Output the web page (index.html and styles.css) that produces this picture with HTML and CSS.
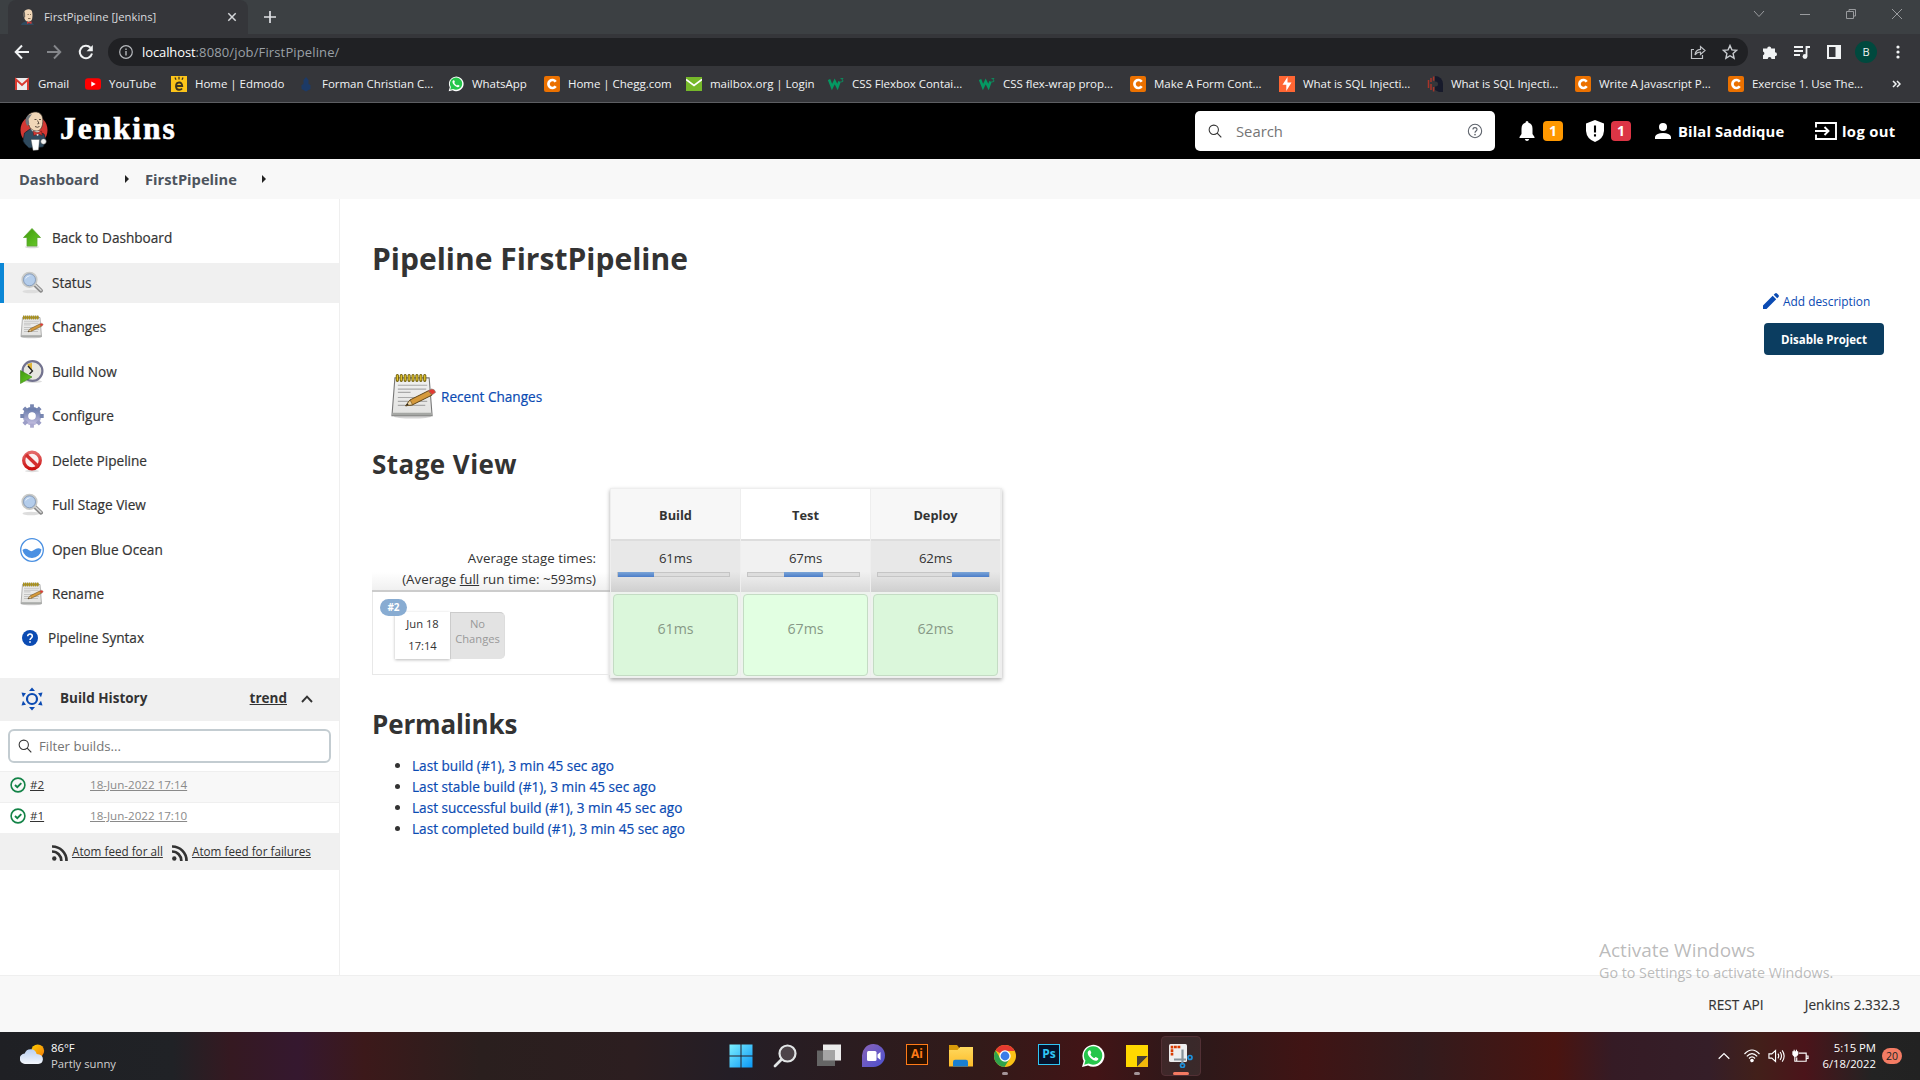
FILE: index.html
```html
<!DOCTYPE html>
<html lang="en">
<head>
<meta charset="utf-8">
<title>FirstPipeline [Jenkins]</title>
<link rel="stylesheet" href="styles.css">
</head>
<body>
<svg class="defs" width="0" height="0">
  <defs>
    <linearGradient id="paper" x1="0" y1="0" x2="0" y2="1"><stop offset="0" stop-color="#f1f1f1"/><stop offset="1" stop-color="#e2e2e0"/></linearGradient>
    <linearGradient id="green" x1="0" y1="0" x2="1" y2="1"><stop offset="0" stop-color="#3f9a0c"/><stop offset="1" stop-color="#69cb2b"/></linearGradient>
    <linearGradient id="gearfill" x1="0" y1="0" x2="0" y2="1"><stop offset="0" stop-color="#6d7fae"/><stop offset="1" stop-color="#b9b6da"/></linearGradient>
    <linearGradient id="redfill" x1="0" y1="0" x2="0" y2="1"><stop offset="0" stop-color="#e46a6a"/><stop offset="1" stop-color="#cb1212"/></linearGradient>
    <linearGradient id="win" x1="0" y1="0" x2="1" y2="1"><stop offset="0" stop-color="#7df0ff"/><stop offset="1" stop-color="#0a97f5"/></linearGradient>
    <linearGradient id="folder" x1="0" y1="0" x2="0" y2="1"><stop offset="0" stop-color="#ffd95e"/><stop offset="1" stop-color="#fdbc2a"/></linearGradient>
    <linearGradient id="teams" x1="0" y1="0" x2="1" y2="1"><stop offset="0" stop-color="#8a63b8"/><stop offset="1" stop-color="#4a50cf"/></linearGradient>
    <linearGradient id="cloud" x1="0" y1="0" x2="0" y2="1"><stop offset="0" stop-color="#b9d0f2"/><stop offset="1" stop-color="#f3f6fc"/></linearGradient>
    <linearGradient id="sun" x1="0" y1="0" x2="1" y2="1"><stop offset="0" stop-color="#ffd000"/><stop offset="1" stop-color="#f27a0a"/></linearGradient>
    <symbol id="butler" viewBox="0 0 28 40">
      <ellipse cx="14" cy="19" rx="13.500" ry="14.500" fill="#d33833"/>
      <path d="M4.500 22 10 18l8 3 6 2 2 7-3 6-14 1-4-4-2-3z" fill="#2f4a5e" stroke="#12202b" stroke-width=".7"/>
      <path d="M10.500 18 20 20l-2 5-3-2z" fill="#f4f4f4"/>
      <path d="M7 6C9 1 17-.5 20 2.500c3 2 3.200 7 2.500 11-.7 4-3 6.500-6 6.500-4 0-7-3-7.500-6C6 13 5.500 9 7 6z" fill="#f0d6b7" stroke="#3b342b" stroke-width=".7"/>
      <path d="M8 4.500C5.800 6 5 9 5.800 12l1.500 3 2-2-.7-5L12 3z" fill="#70767c"/>
      <path d="M14.500 8.500h2M19 8.500h2M17.500 9.500l1.500 3-1.700.4M15 15.500q2.500 1.500 4.500 0" fill="none" stroke="#3b2f25" stroke-width=".8"/>
      <path d="m13 20 4 1.700 4.500-1.700.8 4.500-4.500-1.800-4 2z" fill="#d33833" stroke="#5d1512" stroke-width=".5"/>
      <path d="M11 28.500h8.500l-1 10.500-5.500.5z" fill="#fff" stroke="#444" stroke-width=".4"/>
      <circle cx="23.500" cy="30.500" r="2.800" fill="#f2f2f2" stroke="#333" stroke-width=".5"/>
    </symbol>
    <symbol id="face" viewBox="0 0 16 16">
      <path d="M1 16q.5-3 5-3.500l6 .5 2 3z" fill="#2f4a5e"/>
      <path d="M4 3C5 .2 9.500-.5 11.300 1.300c1.500 1.500 1.400 6 .8 8.700-.6 2.500-4 3.500-6 2C4 10 3 6 4 3z" fill="#f0d6b7"/>
      <path d="M4.500 2C2.800 4 2.800 7 4.200 9l1-1L5 4z" fill="#6b655e"/>
      <path d="M7.500 5.500h1.300M10 5.500h1M8 9.500h2.500" stroke="#59452f" stroke-width=".7"/>
      <path d="m7 12.300 2 .9 2.500-.9v2.700L9 14l-2 1z" fill="#d33833"/>
    </symbol>
    <symbol id="lens" viewBox="0 0 24 24">
      <ellipse cx="11" cy="20.500" rx="8.500" ry="1.700" fill="#ddd"/>
      <path d="m15 14 6 5.700" stroke="#8c8c8c" stroke-width="4" stroke-linecap="round"/>
      <path d="m15.500 14 5.500 5.200" stroke="#d9d9d9" stroke-width="1.500" stroke-linecap="round"/>
      <circle cx="9.500" cy="8.800" r="7" fill="#b4cdeb" stroke="#c9cac7" stroke-width="2.200"/>
      <circle cx="9.500" cy="8.800" r="6" fill="none" stroke="#7892b8" stroke-width=".8"/>
      <path d="M5 8.500q1.200-4.300 6-4-4 1.200-6 4z" fill="#eef5fd"/>
    </symbol>
    <symbol id="notepad" viewBox="0 0 48 48">
      <ellipse cx="23" cy="44.500" rx="19" ry="2" fill="#d4d4d4"/>
      <path d="M5 5h35l3 38.500H2z" fill="url(#paper)" stroke="#777" stroke-width="1.100"/>
      <path d="M2.500 40.500h40l.3 3H2.200z" fill="#a5a7a4"/>
      <path d="M8 12.500h30M8 16.500h29M8 19.800h13M8 25h22M8 29h30M8 33h28" stroke="#a9a9a9" stroke-width="1.200"/>
      <path d="M7.500 2.500v5M11.500 2.500v5M15.500 2.500v5M19.500 2.500v5M23.500 2.500v5M27.500 2.500v5M31.500 2.500v5M35.500 2.500v5" stroke="#6e5c05" stroke-width="3.200" stroke-linecap="round"/>
      <path d="M7.500 2.800v4.400M11.500 2.800v4.400M15.500 2.800v4.400M19.500 2.800v4.400M23.500 2.800v4.400M27.500 2.800v4.400M31.500 2.800v4.400M35.500 2.800v4.400" stroke="#e5c62c" stroke-width="1.400" stroke-linecap="round"/>
      <path d="m16 33.500 4.500-6 19-9.500 3.500 4.500-20 10z" fill="#d69a3c" stroke="#5f4210" stroke-width="1"/>
      <path d="m16 33.500 4.500-6 2.500 5z" fill="#edd5a5" stroke="#5f4210" stroke-width=".6"/>
      <path d="m16 33.500 2-2.500 1 1.800z" fill="#222"/>
      <path d="m39 18 3.500-1.700q3.500.2 4 3.500L43 22.300z" fill="#e23b33" stroke="#8d7d72" stroke-width=".7"/>
    </symbol>
    <symbol id="q" viewBox="0 0 24 24"><circle cx="12" cy="12" r="10" fill="none" stroke="currentColor" stroke-width="1.600"/><path d="M9 9.700C9 6 15 6 15 9.600c0 2.400-3 2.400-3 5" fill="none" stroke="currentColor" stroke-width="1.700"/><circle cx="12" cy="17.500" r="1.200" fill="currentColor"/></symbol>
    <symbol id="search" viewBox="0 0 16 16"><circle cx="6.600" cy="6.600" r="5.300" fill="none" stroke="currentColor" stroke-width="1.200"/><path d="m10.500 10.500 4.700 4.700" stroke="currentColor" stroke-width="1.300"/></symbol>
    <symbol id="rss" viewBox="0 0 16 16"><circle cx="2.300" cy="13.500" r="2.200" fill="currentColor"/><path d="M0 6.500A9.200 9.200 0 0 1 9.300 16M0 1.500A14.200 14.200 0 0 1 14.500 16" fill="none" stroke="currentColor" stroke-width="2.700"/></symbol>
    <symbol id="ok" viewBox="0 0 16 16"><circle cx="8" cy="8" r="6.900" fill="none" stroke="#138347" stroke-width="1.600"/><path d="m5 8 2.300 2.200 4-4" fill="none" stroke="#138347" stroke-width="1.900"/></symbol>
    <symbol id="chegg" viewBox="0 0 16 16"><rect width="16" height="16" rx="2" fill="#eb7100"/><path d="M11.700 5.700A4 4 0 1 0 11.700 10.300" fill="none" stroke="#fff" stroke-width="2.700"/></symbol>
    <symbol id="whats" viewBox="0 0 24 24"><path d="M1 23l1.700-6A11 11 0 1 1 7 21.400z" fill="#fff"/><path d="M3.200 20.800l1.200-4.200A9.200 9.200 0 1 1 7.700 19.600z" fill="#25c64b"/><path d="M8 6.500c-2.500 1.500-1 5 1.500 7.500s6 4 7.700 1.500c.6-1-.2-1.500-2.400-2.500-1 .2-.8 1.400-2 1-1.500-.7-2.700-2-3.300-3.400-.2-.8.8-.8.8-1.800C9.600 6.800 9.400 6 8 6.500z" fill="#fff"/></symbol>
    <symbol id="w3" viewBox="0 0 16 16"><path d="M1 3.500 4 11l2.700-5.500L9.500 11l2-5.500" fill="none" stroke="#059862" stroke-width="2.600"/><path d="M12.500 2.500H15L13.800 4q1.500 0 1.200 1.300-.7 1-2.500.4" fill="none" stroke="#059862" stroke-width=".8"/></symbol>
  </defs>
</svg>

<header class="browser">
  <div class="tabstrip">
    <div class="tab">
      <svg class="i16"><use href="#face"/></svg>
      <span class="tab-title">FirstPipeline [Jenkins]</span>
      <svg class="tab-close" viewBox="0 0 10 10"><path d="m1.300 1.300 7.400 7.400M8.700 1.300 1.300 8.700" stroke="#d5d7da" stroke-width="1.500"/></svg>
    </div>
    <svg class="new-tab" viewBox="0 0 12 12"><path d="M6 0v12M0 6h12" stroke="#dfe1e5" stroke-width="1.700"/></svg>
    <div class="window-controls">
      <svg viewBox="0 0 12 12"><path d="m1 3 5 5.500L11 3"/></svg>
      <svg viewBox="0 0 12 12"><path d="M1 6.500h10"/></svg>
      <svg viewBox="0 0 12 12"><path d="M1.500 3.500h7v7h-7zM4 3.500v-2h6.500V8H8.500"/></svg>
      <svg viewBox="0 0 12 12"><path d="m1 1 10 10M11 1 1 11"/></svg>
    </div>
  </div>
  <div class="toolbar">
    <svg class="nav" viewBox="0 0 16 16"><path d="M15 8H2M8 1.500 1.700 8 8 14.500" fill="none" stroke="#f1f3f4" stroke-width="2"/></svg>
    <svg class="nav" viewBox="0 0 16 16"><path d="M1 8h13M8 1.500 14.300 8 8 14.500" fill="none" stroke="#85878b" stroke-width="1.900"/></svg>
    <svg class="nav" viewBox="0 0 16 16"><path d="M14 9.500A6.200 6.200 0 1 1 12.500 3.700" fill="none" stroke="#f1f3f4" stroke-width="2"/><path d="M14.800 1v6.200H8.600z" fill="#f1f3f4"/></svg>
    <div class="omnibox">
      <svg class="info" viewBox="0 0 14 14"><circle cx="7" cy="7" r="6.300" fill="none" stroke="#b6b9bd" stroke-width="1.200"/><path d="M7 6v4.500M7 3.500V5" stroke="#b6b9bd" stroke-width="1.400"/></svg>
      <span class="url"><b>localhost</b>:8080/job/FirstPipeline/</span>
      <svg class="i16" viewBox="0 0 16 16"><path d="M4 5.500H1.500v9h11V11M5 11q.5-5.500 5.500-5.700V2.500l4.500 4-4.500 4V8Q7 8 5 11z" fill="none" stroke="#bfc2c6" stroke-width="1.200"/></svg>
      <svg class="i16" viewBox="0 0 16 16"><path d="m8 1.500 1.900 4.400 4.800.4-3.600 3.200 1 4.700L8 11.700l-4.100 2.500 1-4.700L1.300 6.300l4.800-.4z" fill="none" stroke="#c9ccd0" stroke-width="1.400"/></svg>
    </div>
    <div class="actions">
      <svg class="i16" viewBox="0 0 16 16"><path d="M1 4.500h4.200a2 2 0 1 1 4 0H13v3.700a2 2 0 1 1 0 4V15H9.500a1.900 1.900 0 1 0-3.800 0H1v-3.800a2 2 0 0 0 0-3.800z" fill="#f1f3f4"/></svg>
      <svg class="i16" viewBox="0 0 16 16"><path d="M0 3h9M0 7h9M0 11h6" stroke="#f1f3f4" stroke-width="1.800"/><path d="M12.500 12V3H16" fill="none" stroke="#f1f3f4" stroke-width="1.800"/><circle cx="11" cy="12.500" r="2.400" fill="#f1f3f4"/></svg>
      <svg class="i16" viewBox="0 0 16 16"><path d="M2 2h12v12H2z" fill="none" stroke="#f1f3f4" stroke-width="2"/><path d="M9.500 2H14v12H9.500z" fill="#f1f3f4"/></svg>
      <span class="avatar">B</span>
      <svg class="i16" viewBox="0 0 16 16" fill="#f1f3f4"><circle cx="8" cy="3" r="1.600"/><circle cx="8" cy="8" r="1.600"/><circle cx="8" cy="13" r="1.600"/></svg>
    </div>
  </div>
  <nav class="bookmarks">
    <a><svg class="i16" viewBox="0 0 16 16"><path d="M1 2h14v12H1z" fill="#ececec"/><path d="M2 14V3.500L8 9l6-5.500V14" fill="none" stroke="#d93a30" stroke-width="2"/></svg>Gmail</a>
    <a><svg class="i16" viewBox="0 0 16 16"><rect y="2.300" width="16" height="11.400" rx="3" fill="#f00"/><path d="M6.300 5.500v5l4.400-2.500z" fill="#fff"/></svg>YouTube</a>
    <a><svg class="i16" viewBox="0 0 16 16"><path d="M0 0h16v16H0z" fill="#fcc419"/><path d="M5 10h6.200Q11 6.300 8 6.500q-3 .2-3 4 .3 3.500 3.300 3.300 1.700 0 2.700-1.300" fill="none" stroke="#3b3320" stroke-width="1.900"/><path d="m4 1.500 1 2.200M8 .8v2.700M12 1.500l-1 2.200" stroke="#3b3320" stroke-width="1.300"/></svg>Home | Edmodo</a>
    <a><svg class="i16" viewBox="0 0 16 16"><path d="m8 1 2.500 3v4l2 1v4L8 15.500 3.500 13V9l2-1V4z" fill="#1c3a67"/></svg>Forman Christian C...</a>
    <a><svg class="i16"><use href="#whats"/></svg>WhatsApp</a>
    <a><svg class="i16"><use href="#chegg"/></svg>Home | Chegg.com</a>
    <a><svg class="i16" viewBox="0 0 16 16"><path d="M0 1h16v14H0z" fill="#76b82a"/><path d="m0 3.500 8 6 8-6" fill="none" stroke="#fff" stroke-width="1.700"/></svg>mailbox.org | Login</a>
    <a><svg class="i16"><use href="#w3"/></svg>CSS Flexbox Contai...</a>
    <a><svg class="i16"><use href="#w3"/></svg>CSS flex-wrap prop...</a>
    <a><svg class="i16"><use href="#chegg"/></svg>Make A Form Cont...</a>
    <a><svg class="i16" viewBox="0 0 16 16"><path d="M0 0h16v16H0z" fill="#ff6633"/><path d="M8.500 1 3.500 8.800H7.300V15l5.200-8.500H8.500z" fill="#fff"/></svg>What is SQL Injecti...</a>
    <a><svg class="i16" viewBox="0 0 16 16"><path d="M8 0a8 8 0 0 1 8 8v8h-4l-4-2z" fill="#171a2b"/><path d="M1.500 4v8M4 2v4M4 8v6M6.600.5v4.300M6.600 11v4.500" stroke="#a8352a" stroke-width="1.500"/><circle cx="8.500" cy="8" r="2.500" fill="#35363a"/></svg>What is SQL Injecti...</a>
    <a><svg class="i16"><use href="#chegg"/></svg>Write A Javascript P...</a>
    <a><svg class="i16"><use href="#chegg"/></svg>Exercise 1. Use The...</a>
    <svg class="more" viewBox="0 0 9 8"><path d="m1 1 3 3-3 3M5 1l3 3-3 3" fill="none" stroke="#f1f3f4" stroke-width="1.500"/></svg>
  </nav>
</header>

<div class="jenkins-header">
  <svg class="logo"><use href="#butler"/></svg>
  <span class="wordmark">Jenkins</span>
  <div class="searchbox">
    <svg class="lens"><use href="#search"/></svg>
    <span>Search</span>
    <svg class="i16"><use href="#q"/></svg>
  </div>
  <svg class="bell" viewBox="0 0 16 20"><path d="M8 0q1.500 0 1.500 1.800 4 1.200 4 6V13l2 3v1H.5v-1l2-3V7.800q0-4.800 4-6Q6.500 0 8 0zM5.800 18h4.400Q9.700 20 8 20t-2.200-2z" fill="#fff"/></svg>
  <span class="count orange">1</span>
  <svg class="shield" viewBox="0 0 18 22"><path d="m9 0 9 3.500V11q-.7 8-9 11-8.300-3-9-11V3.500z" fill="#fff"/><path d="M9 5.500v7M9 14.300v2.200" stroke="#000" stroke-width="2.100"/></svg>
  <span class="count red">1</span>
  <svg class="person" viewBox="0 0 16 16"><circle cx="8" cy="4" r="4" fill="#fff"/><path d="M0 16v-2.500Q1.500 10 8 10t8 3.500V16z" fill="#fff"/></svg>
  <span class="user">Bilal Saddique</span>
  <svg class="exit" viewBox="0 0 22 18"><path d="M1 5.500V1h20v16H1v-4.500M0 9h13M9.500 5l4 4-4 4" fill="none" stroke="#fff" stroke-width="1.900"/></svg>
  <span class="logout">log out</span>
</div>

<nav class="breadcrumbs">
  <span class="bc1">Dashboard</span><i></i><span class="bc2">FirstPipeline</span><i></i>
</nav>

<main>
  <aside>
    <ul class="tasks">
      <li><svg viewBox="0 0 24 24"><ellipse cx="12" cy="21" rx="7" ry="1.300" fill="#d9d9d9"/><path d="m12 2.500 8.500 9H17v8.500H7v-8.500H3.500z" fill="url(#green)" stroke="#5aa530" stroke-width=".8"/></svg>Back to Dashboard</li>
      <li class="active"><svg><use href="#lens"/></svg>Status</li>
      <li><svg><use href="#notepad"/></svg>Changes</li>
      <li><svg viewBox="0 0 24 24"><ellipse cx="13" cy="21.500" rx="9" ry="1.500" fill="#ddd"/><circle cx="12.500" cy="11" r="9.900" fill="#e6e6e0" stroke="#73738f" stroke-width="2.200"/><path d="M12 11 7 4.500q3-2 5-1.500z" fill="#e0b537"/><path d="m8 6 4.500 5-3 3" fill="none" stroke="#222" stroke-width="1.300"/><path d="M.5 10.500 12 17 .5 23.500z" fill="url(#green)" stroke="#3b8710" stroke-width=".6"/></svg>Build Now</li>
      <li><svg viewBox="0 0 24 24"><path d="M12 5.500a6.500 6.500 0 1 0 0 13 6.500 6.500 0 0 0 0-13z" fill="none" stroke="url(#gearfill)" stroke-width="5.500"/><g stroke="#7886b1" stroke-width="3.800"><path d="M12 .3v4"/><path d="M12 19.700v4" stroke="#aaa8cf"/><path d="M.3 12h4M19.700 12h4M3.800 3.800l3 3M20.200 3.800l-3 3"/><path d="m3.800 20.200 3-3M20.200 20.200l-3-3" stroke="#9c9ec7"/></g><circle cx="12" cy="12" r="3.300" fill="#fff"/></svg>Configure</li>
      <li><svg viewBox="0 0 24 24"><ellipse cx="12" cy="22" rx="7" ry="1.200" fill="#ddd"/><circle cx="12" cy="11.500" r="8.300" fill="#faf1f1" stroke="url(#redfill)" stroke-width="3.300"/><path d="m6 5.700 12 11.600" stroke="#d43030" stroke-width="3.300"/></svg>Delete Pipeline</li>
      <li><svg><use href="#lens"/></svg>Full Stage View</li>
      <li><svg viewBox="0 0 24 24"><circle cx="12" cy="12" r="11.300" fill="#fff" stroke="#4a90e2" stroke-width="1.300"/><path d="M2.500 12q3-2.500 6.500.3 2.500 1.800 5-.3 4-3.300 7.500-.5a9.600 9.600 0 0 1-19 .5z" fill="#4a90e2"/></svg>Open Blue Ocean</li>
      <li><svg><use href="#notepad"/></svg>Rename</li>
      <li class="syntax"><svg viewBox="0 0 24 24"><circle cx="12" cy="12" r="12" fill="#0b4bb3"/><path d="M8.500 9.500c0-4.700 7-4.700 7 0 0 2.700-3.500 2.700-3.500 5.500" fill="none" stroke="#fff" stroke-width="2.300"/><path d="M12 16.700v2.500" stroke="#fff" stroke-width="2.500"/></svg>Pipeline Syntax</li>
    </ul>
    <div class="history-head">
      <svg class="sunny" viewBox="0 0 24 24"><circle cx="12" cy="12" r="5" fill="none" stroke="#0b4bb3" stroke-width="2.200"/><path d="m12 .5 3 3.500H9zM12 23.500 9 20h6zM1.500 5.500l4.500.8-3 4zM22.500 5.500l-4.500.8 3 4zM1.500 18.500l4.500-.8-3-4zM22.500 18.500l-4.500-.8 3-4z" fill="#0b4bb3"/></svg>
      <b>Build History</b><a>trend</a>
      <svg class="chev" viewBox="0 0 12 8"><path d="m1 7 5-5.300L11 7" fill="none" stroke="#333" stroke-width="1.900"/></svg>
    </div>
    <div class="filter"><svg><use href="#search"/></svg>Filter builds...</div>
    <div class="build odd"><svg class="i16"><use href="#ok"/></svg><a>#2</a><a class="date">18-Jun-2022 17:14</a></div>
    <div class="build"><svg class="i16"><use href="#ok"/></svg><a>#1</a><a class="date">18-Jun-2022 17:10</a></div>
    <div class="feeds"><svg class="i16"><use href="#rss"/></svg><span><a>Atom feed for all</a></span><svg class="i16"><use href="#rss"/></svg><a>Atom feed for failures</a></div>
  </aside>

  <section class="content">
    <h1>Pipeline FirstPipeline</h1>
    <div class="side-actions">
      <a><svg class="i16" viewBox="0 0 16 16"><path d="M0 12.500 9.700 2.800l3.500 3.500L3.500 16H0zM10.700 1.800 12 .5q1-.8 2 0L15.500 2q.8 1 0 2l-1.300 1.300z" fill="#0b4bb3"/></svg>Add description</a>
      <button>Disable Project</button>
    </div>
    <div class="recent"><svg><use href="#notepad"/></svg><a>Recent Changes</a></div>
    <h2 class="h-stage">Stage View</h2>
    <div class="stage-view">
      <div class="runs">
        <div class="averages"><span>Average stage times:</span><span>(Average <u>full</u> run time: ~593ms)</span></div>
        <div class="run">
          <div class="card"><span>Jun 18</span><span>17:14</span></div>
          <div class="commits">No<br>Changes</div>
          <span class="run-no">#2</span>
        </div>
      </div>
      <div class="stages">
        <div class="stage odd"><div class="name">Build</div><div class="avg">61ms<div class="track"><i style="width:32%"></i></div></div><div class="result"><span>61ms</span></div></div>
        <div class="stage"><div class="name">Test</div><div class="avg">67ms<div class="track"><i style="width:35.500%;margin-left:32%"></i></div></div><div class="result"><span>67ms</span></div></div>
        <div class="stage odd"><div class="name">Deploy</div><div class="avg">62ms<div class="track"><i style="width:33%;margin-left:67%"></i></div></div><div class="result"><span>62ms</span></div></div>
      </div>
    </div>
    <h2 class="h-perma">Permalinks</h2>
    <ul class="permalinks">
      <li><a>Last build (#1), 3 min 45 sec ago</a></li>
      <li><a>Last stable build (#1), 3 min 45 sec ago</a></li>
      <li><a>Last successful build (#1), 3 min 45 sec ago</a></li>
      <li><a>Last completed build (#1), 3 min 45 sec ago</a></li>
    </ul>
  </section>
</main>

<footer><a>REST API</a><a>Jenkins 2.332.3</a></footer>
<div class="watermark"><div class="wm1">Activate Windows</div><div class="wm2">Go to Settings to activate Windows.</div></div>

<div class="taskbar">
  <div class="weather">
    <svg viewBox="0 0 24 20"><circle cx="17" cy="6.500" r="6.200" fill="url(#sun)"/><path d="M5 19a5 5 0 0 1-.5-10A6 6 0 0 1 16 9.500q6 .3 6 5-.3 4.300-4.500 4.500z" fill="url(#cloud)"/></svg>
    <div><span class="temp">86°F</span><span class="sky">Partly sunny</span></div>
  </div>
  <div class="apps">
    <span><svg viewBox="0 0 24 24"><path d="M.5.500h11v11H.5zM12.500.500h11v11h-11zM.5 12.500h11v11H.5zM12.500 12.500h11v11h-11z" fill="url(#win)"/></svg></span>
    <span><svg viewBox="0 0 24 24"><circle cx="14.500" cy="9.500" r="8" fill="#4d4449" stroke="#e2e5e6" stroke-width="2.200"/><path d="m8.500 15.500-6.500 6.500" stroke="#e2e5e6" stroke-width="2.800" stroke-linecap="round"/></svg></span>
    <span><svg viewBox="0 0 24 24"><path d="M6 .5h18v16H6z" fill="#ececec"/><path d="M0 6.500h18V22H0z" fill="#656565"/><path d="M6 6.500h12v10H6z" fill="#a5a5a5"/></svg></span>
    <span><svg viewBox="0 0 24 24"><path d="M1 23V12A11.500 11.500 0 1 1 12.500 23z" fill="url(#teams)"/><rect x="6" y="7" width="9.500" height="10" rx="1.500" fill="#fff"/><path d="m16.500 10.500 3-2.500v8l-3-2.500z" fill="#fff"/></svg></span>
    <span><b class="adobe ai">Ai</b></span>
    <span><svg viewBox="0 0 24 24"><path d="M0 1h8l2 2.500V8H0z" fill="#d99a0a"/><path d="M0 6h8.500L11 3h13v19.500H0z" fill="url(#folder)"/><path d="M4 22.500V18q0-2.300 2-2.300h11q2 0 2 2.300v4.500z" fill="#1a7fd0"/></svg></span>
    <span class="open"><svg viewBox="0 0 24 24"><circle cx="12" cy="12" r="11" fill="#fbc116"/><path d="M12 12 2.500 6.500A11 11 0 0 1 21.800 7H12z" fill="#e53a30"/><path d="M2.500 6.500A11 11 0 0 0 11.500 23l5-8L12 12 7.200 14z" fill="#2fa24c"/><circle cx="12" cy="12" r="5.700" fill="#fff"/><circle cx="12" cy="12" r="4.400" fill="#3b7de8"/></svg></span>
    <span><b class="adobe ps">Ps</b></span>
    <span><svg><use href="#whats"/></svg></span>
    <span class="open"><svg viewBox="0 0 24 24"><path d="M1 1h22v22H1z" fill="#ffd800"/><path d="M12 12h11L12 23z" fill="#463f37"/><path d="M23 12v11H12z" fill="#f1b80a"/></svg></span>
    <span class="open current"><svg viewBox="0 0 24 24"><rect width="18" height="18" rx="1.500" fill="#eee"/><path d="M3 11.500V3h9" fill="none" stroke="#d83b01" stroke-width="2.600" stroke-dasharray="2.800 .7"/><path d="M13.500 5.500v12q0 2-1 2.500M5 15.500h12" stroke="#87939b" stroke-width="2.200" fill="none"/><circle cx="21" cy="13.500" r="2" fill="none" stroke="#1d91dc" stroke-width="1.700"/><circle cx="13.500" cy="21.500" r="2" fill="none" stroke="#1d91dc" stroke-width="1.700"/></svg></span>
  </div>
  <div class="tray">
    <svg class="t-chev" viewBox="0 0 12 8"><path d="m.7 6.700 5.300-5.200 5.300 5.200"/></svg>
    <svg class="t-wifi" viewBox="0 0 16 14"><path d="M.5 5q7.500-8 15 0M2.800 7.300q5.200-5.500 10.400 0M5 9.500q3-3.200 6 0"/><circle cx="8" cy="11.500" r="1.200" fill="#fff"/></svg>
    <svg class="t-vol" viewBox="0 0 18 14"><path d="M1 4.800h3l4-3.600v11.600L4 9.200H1zM10.500 4.500q1.700 2.500 0 5M12.800 2.800q3 4.200 0 8.400M15 1q4.200 6 0 12"/></svg>
    <svg class="t-bat" viewBox="0 0 18 14"><path d="M7 4h8v8.500H5V8.500M15.300 7h1.700v2.500h-1.700M3 5v7.500h2"/><path d="M1 2.500h5v3l-1.500 1.800h-2L1 5.500zM2.300.5v2M4.700.5v2" fill="#fff"/></svg>
    <div class="clock"><span>5:15 PM</span><span>6/18/2022</span></div>
    <span class="notes">20</span>
  </div>
</div>
</body>
</html>
```
FILE: styles.css
```css
* { box-sizing: border-box; }
body {
  margin: 0;
  width: 1920px;
  height: 1080px;
  overflow: hidden;
  display: flex;
  flex-direction: column;
  background: #fff;
  color: #333;
  font: 14px/20px "Open Sans", "Noto Sans", sans-serif;
  white-space: nowrap;
}
.defs { position: absolute; }
svg { display: block; flex: none; }
.i16 { width: 16px; height: 16px; flex: none; }

/* Browser window */
.browser { height: 103px; background: #35363a; border-bottom: 1px solid #5d5e62; color: #f1f3f4; font-size: 11.500px; }
.tabstrip { height: 34px; background: #3c4043; display: flex; align-items: center; padding-left: 8px; }
.tab { width: 240px; height: 34px; background: #35363a; border-radius: 8px 8px 0 0; display: flex; align-items: center; padding: 0 11px 0 12px; }
.tab-title { margin-left: 8px; flex: 1; color: #d9dbde; font-size: 11.300px; }
.tab-close { width: 10px; height: 10px; }
.new-tab { width: 12px; height: 12px; margin-left: 16px; }
.window-controls { display: flex; gap: 34px; margin-left: auto; padding: 0 17px 6px 0; }
.window-controls svg { width: 12px; height: 12px; fill: none; stroke: #999b9e; stroke-width: 1; }
.toolbar { height: 36px; display: flex; align-items: center; padding-left: 14px; }
.nav { width: 16px; height: 16px; margin-right: 16px; }
.omnibox { width: 1640px; height: 28px; margin-left: -2px; border-radius: 14px; background: #202124; display: flex; align-items: center; padding: 0 10px 0 11px; }
.info { width: 14px; height: 14px; }
.url { flex: 1; margin-left: 9px; font-size: 13px; letter-spacing: .13px; color: #9aa0a6; }
.url b { font-weight: 400; letter-spacing: -.1px; color: #fff; }
.omnibox .i16 + .i16 { margin-left: 16px; }
.actions { display: flex; align-items: center; margin-left: 14px; }
.actions .i16 + .i16 { margin-left: 16px; }
.avatar { width: 22px; height: 22px; margin: 0 13px; border-radius: 50%; background: #00493e; text-align: center; line-height: 22px; font-size: 11px; }
.bookmarks { height: 28px; padding-left: 14px; display: grid; align-items: center; grid-template-columns: 71px 86px 127px 150px 96px 142px 142px 151px 151px 149px 148px 148px 153px 164px 16px; }
.bookmarks a { display: flex; align-items: center; gap: 8px; letter-spacing: -.03px; }
.more { width: 9px; height: 8px; }

/* Jenkins header */
.jenkins-header { height: 56px; background: #000; color: #fff; display: flex; align-items: center; padding-left: 20px; font-weight: 700; font-size: 14.800px; letter-spacing: .13px; }
.logo { width: 28px; height: 40px; }
.wordmark { margin-left: 12px; width: 1135px; font: 700 31.500px/40px "Liberation Serif", serif; letter-spacing: 1.900px; padding-bottom: 4px; -webkit-text-stroke: .6px #fff; }
.searchbox { width: 300px; height: 40px; border-radius: 5px; background: #fff; color: #757575; display: flex; align-items: center; padding: 0 12px 0 13px; font-weight: 400; font-size: 14.800px; letter-spacing: 0; }
.searchbox .lens { width: 14px; height: 14px; color: #333; }
.searchbox span { flex: 1; margin-left: 14px; }
.searchbox .i16 { color: #5d626b; }
.bell { width: 16px; height: 20px; margin-left: 24px; }
.count { width: 20px; height: 20px; border-radius: 4px; text-align: center; line-height: 20px; font-size: 14px; }
.orange { background: #ff9800; margin-left: 8px; }
.red { background: #dc3545; margin-left: 7px; }
.shield { width: 18px; height: 22px; margin-left: 23px; }
.person { width: 16px; height: 16px; margin-left: 24px; }
.user { margin-left: 7px; width: 137px; }
.exit { width: 22px; height: 18px; }
.logout { margin-left: 5px; letter-spacing: .35px; }
.breadcrumbs { height: 40px; background: #f8f8f8; display: flex; align-items: center; padding-left: 19px; color: #4d545d; font-weight: 700; font-size: 14.700px; }
.breadcrumbs i { width: 0; border: 4px solid transparent; border-left-color: #222; border-right: 0; }
.bc1 { width: 106px; }
.bc1 + i { margin-right: 16px; }
.bc2 { width: 117px; }

/* Side panel */
main { height: 776px; display: flex; }
aside { width: 340px; border-right: 1px solid #efefef; }
.tasks { list-style: none; margin: 0; padding: 19px 0 0; height: 479px; display: flex; flex-direction: column; gap: 4.500px; }
.tasks li { height: 40px; flex: none; display: flex; align-items: center; padding-left: 20px; font-size: 13.600px; -webkit-text-stroke: .2px #333; }
.tasks svg { width: 24px; height: 24px; margin-right: 8px; -webkit-text-stroke: 0; }
.tasks .active { background: #f0f0f0; border-left: 4px solid #0b87d6; padding-left: 16px; }
.tasks .syntax { padding: 0 0 2px 22px; }
.tasks .syntax svg { width: 16px; height: 16px; margin-right: 10px; }
.history-head { height: 43px; background: #f0f0f0; display: flex; align-items: center; padding: 0 26px 2px 20px; font-size: 13.500px; }
.history-head b { margin-left: 16px; flex: 1; font-weight: 700; line-height: 18px; padding-bottom: 2px; }
.history-head a { font-weight: 700; text-decoration: underline; padding-bottom: 2px; }
.sunny { width: 24px; height: 24px; }
.chev { width: 12px; height: 8px; margin-left: 14px; }
.filter { margin: 8px; height: 34px; border: 2px solid #c3ccd1; border-radius: 6px; display: flex; align-items: center; padding-left: 8px; color: #757575; font-size: 13.200px; }
.filter svg { width: 14px; height: 14px; margin-right: 7px; color: #333; }
.build { height: 31px; border-top: 1px solid #efefef; display: flex; align-items: center; padding: 0 0 4px 10px; font-size: 11.600px; }
.build.odd { background: #f8f8f8; }
.build a { margin-left: 4px; width: 56px; text-decoration: underline; }
.build .date { color: #8a8a8a; }
.feeds { height: 37px; background: #f0f0f0; display: flex; align-items: center; padding: 0 0 2px 52px; font-size: 11.700px; }
.feeds svg { margin: 4px 4px 0 0; }
.feeds a { text-decoration: underline; }
.feeds span { width: 100px; }

/* Main panel */
.content { flex: 1; padding: 40px 36px 0 32px; }
h1, h2 { margin: 0; font-weight: 700; }
h1 { font-size: 30px; line-height: 40px; height: 44px; }
.side-actions { height: 72px; margin-top: 8px; display: flex; flex-direction: column; align-items: flex-end; }
.side-actions a { width: 121px; height: 20px; display: flex; align-items: center; gap: 4px; color: #0b4bb3; font-size: 11.900px; }
button { width: 120px; height: 32px; margin-top: 12px; padding: 2px 0 0; border: 0; border-radius: 4px; background: #0b3d60; color: #fff; font: 700 11.500px/20px "Open Sans", sans-serif; }
.recent { height: 48px; margin: 9px 0 0 18px; display: flex; align-items: center; gap: 4px; color: #0b4bb3; font-size: 13.600px; -webkit-text-stroke: .2px #0b4bb3; }
.recent svg { width: 47px; height: 47px; -webkit-text-stroke: 0; }
.recent a { padding-top: 2px; }
h2 { font-size: 26px; line-height: 32px; }
.h-stage { margin-top: 28px; letter-spacing: .45px; }
.stage-view { display: flex; margin-top: 8px; height: 190px; }
.runs { width: 238px; padding-top: 42px; }
.averages { height: 62px; display: flex; flex-direction: column; align-items: flex-end; padding: 18px 14px 0 0; line-height: 21px; font-size: 13.300px; letter-spacing: .02px; background: linear-gradient(#fff 70%, #f0f0f0); border-bottom: 2px solid #ccc; }
.run { position: relative; height: 83px; border: 1px solid #e8e8e8; border-top: 0; display: flex; padding: 20px 0 0 22px; text-align: center; font-size: 11.200px; }
.card { width: 55px; height: 47px; line-height: 22px; display: flex; flex-direction: column; box-shadow: 0 1px 3px #bbb; padding-top: 1px; }
.commits { width: 55px; height: 47px; padding-top: 3px; line-height: 15px; background: #e3e3e3; color: #999; border: 1px solid #ccc; border-bottom: 0; border-right-color: #ddd; border-radius: 0 5px 5px 0; }
.run-no { position: absolute; left: 7px; top: 7px; width: 27px; height: 17px; border-radius: 9px; background: #88acd2; color: #fff; font: 700 10px/17px "Open Sans", sans-serif; }
.stages { width: 392px; display: flex; border: 1px solid #eee; background: #eee; box-shadow: 0 2px 4px #aaa; }
.stage { flex: 1; background: #fff; text-align: center; border-right: 1px solid #eee; }
.name { height: 52px; line-height: 52px; font-size: 12.800px; font-weight: 700; border-bottom: 2px solid #ddd; }
.odd .name { background: #f7f7f7; }
.avg { height: 51px; padding-top: 7px; font-size: 13.200px; letter-spacing: -.1px; background: linear-gradient(#f1f1f1 60%, #d9d9d9); }
.odd .avg { background: linear-gradient(#e8e8e8 60%, #cfcfcf); }
.track { width: 113px; height: 5px; margin: 4px auto 0 6px; border: 1px solid #c5c5c5; background: #ddd; }
.track i { display: block; height: 5px; margin-top: -1px; background: linear-gradient(#7ba5d7, #4b7dc9); }
.result { height: 85px; padding: 2px; background: #eef3ee; }
.result span { display: block; height: 82px; border: 1px solid #c4dcc4; border-radius: 4px; background: #e2ffe2; color: #879987; line-height: 68px; font-size: 14.200px; }
.odd .result span { background: #dbf7db; }
.h-perma { margin-top: 30px; letter-spacing: -.15px; }
.permalinks { margin: 15px 0 0; padding-left: 40px; line-height: 21px; font-size: 13.600px; }
.permalinks a { color: #0b4bb3; -webkit-text-stroke: .2px #0b4bb3; }

footer { height: 57px; background: #f8f8f8; border-top: 1px solid #efefef; display: flex; justify-content: flex-end; align-items: center; gap: 41px; padding: 1px 20px 0 0; font-size: 13.600px; letter-spacing: .05px; -webkit-text-stroke: .15px #333; }
.watermark { position: absolute; left: 1599px; top: 936px; color: rgba(130, 130, 130, .55); }
.wm1 { font-size: 19px; line-height: 28px; }
.wm2 { font-size: 14.300px; line-height: 18px; }

/* Windows taskbar */
.taskbar { height: 48px; display: grid; grid-template-columns: 719px 484px 1fr; color: #fff; font-size: 11.300px; line-height: 16px; background: linear-gradient(90deg, #1f2024, #202226 9%, #351921 12%, #35182f 15.500%, #3c191a 19%, #2a1f1e 25%, #2c1e20 33%, #241e26 38%, #321a19 51%, #421416 57%, #2b191a 62%, #401414 68%, #321b1d 74%, #4a1410 81%, #351b25 84%, #351e28 89%, #42201a 91.500%, #4b141a 94%, #232323 97.500%, #222); }
.weather { display: flex; align-items: center; padding: 0 0 0 20px; }
.weather svg { width: 25px; height: 21px; margin: 0 6px 4px 0; }
.weather span, .clock span { display: block; }
.sky { color: #d0d0d0; }
.apps { display: grid; grid-template-columns: repeat(11, 44px); }
.apps > span { position: relative; display: flex; align-items: center; justify-content: center; }
.apps svg { width: 24px; height: 24px; }
.open::after { content: ""; position: absolute; bottom: 5px; width: 6px; height: 3px; border-radius: 2px; background: #a49599; }
.current::before { content: ""; position: absolute; inset: 4px 2px; border: 1px solid #523035; border-radius: 4px; background: rgba(255, 255, 255, .07); }
.apps .current svg { position: relative; }
.current::after { width: 16px; background: #f37a62; }
.adobe { width: 22px; height: 21px; border: 1px solid; text-align: center; font: 700 12px/18px "Open Sans", sans-serif; margin-bottom: 3px; }
.ai { color: #ff7b18; background: #281000; }
.ps { color: #31c5f4; background: #06122b; }
.tray { display: flex; align-items: center; justify-content: flex-end; padding-right: 18px; }
.tray svg { fill: none; stroke: #fff; stroke-width: 1.200; }
.t-chev { width: 12px; height: 8px; margin-right: 14px; }
.t-wifi { width: 16px; height: 14px; margin-right: 8px; }
.t-vol { width: 17px; height: 14px; margin-right: 7px; }
.t-bat { width: 17px; height: 14px; margin-right: 7px; }
.clock { width: 60px; text-align: right; margin-right: 6px; }
.notes { width: 20px; height: 16px; border-radius: 8px; background: #f47c64; color: #222; text-align: center; line-height: 16px; font-size: 10.500px; }
```
